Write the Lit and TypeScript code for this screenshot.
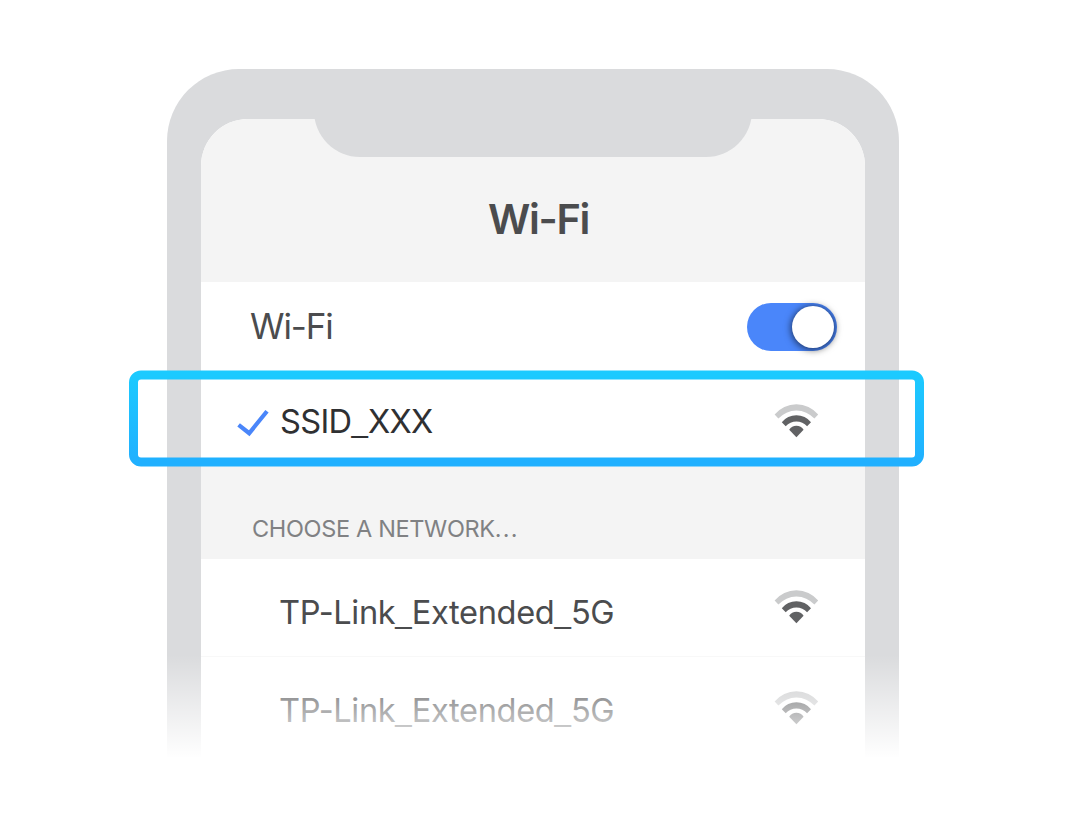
import { LitElement, html, css } from "lit";
import { customElement, property } from "lit/decorators.js";

const withUnderscores = (text: string) =>
  text.split("_").map((part, i) => (i ? html`<span class="underscore">_</span>${part}` : part));

const underscoreStyle = css`
  .underscore {
    font-family: "Liberation Sans", sans-serif;
    font-size: 29.5px;
    line-height: 1;
    letter-spacing: 0;
    vertical-align: 1px;
  }
`;

@customElement("wifi-signal")
class WifiSignal extends LitElement {
  static styles = css`
    :host { display: block; width: 44px; height: 34px; }
    svg { display: block; }
  `;
  render() {
    return html`<svg width="44" height="34" viewBox="-21.4 -33.2 44 34" aria-hidden="true" overflow="visible">
      <path fill="#cacbcc" d="M-21.8-22.6A28.3 28.3 0 0 1 21.8-22.6L18-18.7A24.4 24.4 0 0 0-18-18.7Z"/>
      <path fill="#616264" d="M-14.6-14.9A18.6 18.6 0 0 1 14.6-14.9L10.7-11A14.6 14.6 0 0 0-10.7-11Z"/>
      <path fill="#616264" d="M-7.2-7.5A8.4 8.4 0 0 1 7.2-7.5L0 0Z"/>
    </svg>`;
  }
}

@customElement("network-row")
class NetworkRow extends LitElement {
  @property() name = "";
  static styles = [underscoreStyle, css`
    :host {
      display: flex;
      justify-content: space-between;
      align-items: flex-start;
      box-sizing: border-box;
      padding: 31px 46px 0 78px;
    }
    .name { font-size: 32.6px; line-height: 44px; letter-spacing: -0.35px; color: #4b4c4e; white-space: nowrap; }
    wifi-signal { margin-top: var(--signal-offset, 0); }
  `];
  render() {
    return html`<span class="name">${withUnderscores(this.name)}</span><wifi-signal></wifi-signal>`;
  }
}

@customElement("app-root")
class AppRoot extends LitElement {
  static styles = [underscoreStyle, css`
    :host {
      display: block;
      box-sizing: border-box;
      width: 1080px;
      height: 840px;
      padding: 69px 0 0 166.5px;
      background: #fff;
      font-family: Inter, "Liberation Sans", sans-serif;
      color: #4b4c4e;
      overflow: hidden;
    }
    .phone {
      position: relative;
      box-sizing: border-box;
      width: 732.6px;
      height: 689px;
      padding: 50px 34.1px 0 34.5px;
      border-radius: 72px 72px 0 0;
      background: #dadbdd;
    }
    .screen {
      position: relative;
      height: 639px;
      border-radius: 47px 47px 0 0;
      background: #fff;
      overflow: hidden;
    }
    .notch {
      position: absolute;
      left: 112.6px;
      top: -20px;
      width: 438.6px;
      height: 58px;
      border-radius: 0 0 46px 46px;
      background: #dadbdd;
    }
    .header {
      box-sizing: border-box;
      height: 163px;
      padding: 75px 0 0 11px;
      background: #f4f4f4;
      text-align: center;
    }
    .title { font-size: 41.5px; line-height: 51px; font-weight: 600; letter-spacing: -1.4px; }
    .switch-row {
      display: flex;
      justify-content: space-between;
      box-sizing: border-box;
      height: 93px;
      padding: 21px 28px 0 49px;
    }
    .label { font-size: 35px; line-height: 46px; letter-spacing: -1.1px; }
    .toggle {
      display: flex;
      justify-content: flex-end;
      box-sizing: border-box;
      width: 90px;
      height: 48px;
      padding: 3px;
      border-radius: 24px;
      background: #4a86fa;
    }
    .knob { width: 42px; height: 42px; border-radius: 50%; background: #fff; box-shadow: 0 1px 7px 1px rgba(0, 0, 0, 0.6); }
    .current {
      display: flex;
      box-sizing: border-box;
      height: 90px;
      padding: 29px 46px 0 35px;
    }
    .check { flex: none; margin-top: 5px; }
    .ssid { flex: 1; margin-left: 10px; margin-top: -5px; font-size: 32.6px; line-height: 44px; letter-spacing: -0.65px; color: #2f3032; }
    .section {
      box-sizing: border-box;
      height: 94px;
      padding: 49px 0 0 51px;
      background: #f4f4f4;
      font-size: 23.5px;
      line-height: 30px;
      letter-spacing: -0.34px;
      color: #808183;
    }
    .dots { letter-spacing: 1.2px; }
    .row { height: 98px; border-bottom: 1px solid #f8f8f8; }
    .last { height: 101px; --signal-offset: 3px; }
    .fade {
      position: absolute;
      left: -1px;
      right: -1px;
      bottom: 0;
      height: 103px;
      background: linear-gradient(rgba(255, 255, 255, 0), #fff);
    }
    .highlight {
      position: absolute;
      left: -37.5px;
      top: 301px;
      width: 795px;
      height: 97px;
    }
  `];
  render() {
    return html`
      <div class="phone">
        <div class="screen">
          <div class="header"><div class="title">Wi-Fi</div></div>
          <div class="notch"></div>
          <div class="switch-row">
            <span class="label">Wi-Fi</span>
            <div class="toggle"><div class="knob"></div></div>
          </div>
          <div class="current">
            <svg class="check" width="34" height="28" viewBox="0 0 34 28" aria-hidden="true">
              <path d="M2.6 15.8L13.2 24.2L31 2.3" fill="none" stroke="#4a86fa" stroke-width="4.2"/>
            </svg>
            <span class="ssid">${withUnderscores("SSID_XXX")}</span>
            <wifi-signal></wifi-signal>
          </div>
          <div class="section">CHOOSE A NETWORK<span class="dots">...</span></div>
          <network-row class="row" name="TP-Link_Extended_5G"></network-row>
          <network-row class="last" name="TP-Link_Extended_5G"></network-row>
        </div>
        <div class="fade"></div>
        <svg class="highlight" viewBox="0 0 795 97" aria-hidden="true">
          <defs>
            <linearGradient id="g" x1="0" y1="0" x2="0" y2="1">
              <stop offset="0" stop-color="#1ccaff"/>
              <stop offset="1" stop-color="#20b0ff"/>
            </linearGradient>
          </defs>
          <rect x="4.5" y="4.9" width="786" height="87" rx="7.5" fill="none" stroke="url(#g)" stroke-width="9"/>
        </svg>
      </div>
    `;
  }
}
